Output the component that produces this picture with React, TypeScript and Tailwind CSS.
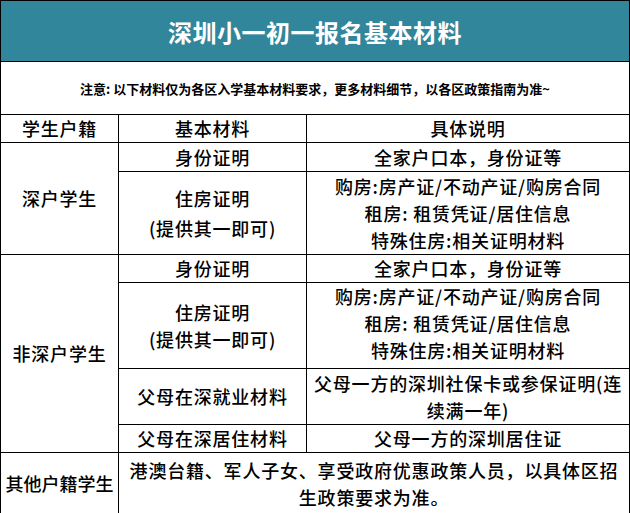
import React from "react";

export default function App() {
  return (
    <div className="min-h-screen bg-white font-['Noto_Sans_CJK_SC','Noto_Sans',sans-serif] text-black">
      <table className="w-[629px] table-fixed border-collapse border border-black text-[18px] font-medium tracking-[0.8px] leading-[27px]">
        <colgroup>
          <col className="w-[118px]" />
          <col className="w-[188px]" />
          <col className="w-[323px]" />
        </colgroup>
        <tbody>
          {/* title */}
          <tr className="h-[61px]">
            <td colSpan={3} className="border border-black bg-[#31869b] text-center text-[24px] font-bold tracking-[0.5px] text-white">
              深圳小一初一报名基本材料
            </td>
          </tr>
          <tr className="h-[53px]">
            <td colSpan={3} className="border border-black text-center text-[13px] font-bold tracking-normal">
              注意: 以下材料仅为各区入学基本材料要求，更多材料细节，以各区政策指南为准~
            </td>
          </tr>

          {/* column heads */}
          <tr className="h-[28px]">
            <td className="border border-black text-center">学生户籍</td>
            <td className="border border-black text-center">基本材料</td>
            <td className="border border-black text-center">具体说明</td>
          </tr>

          {/* 深户 */}
          <tr className="h-[29px]">
            <td rowSpan={2} className="border border-black text-center">深户学生</td>
            <td className="border border-black text-center">身份证明</td>
            <td className="border border-black text-center">全家户口本，身份证等</td>
          </tr>
          <tr className="h-[83px]">
            <td className="border border-black text-center leading-[30px]">
              住房证明
              <br />
              (提供其一即可)
            </td>
            <td className="border border-black text-center">
              购房:房产证/不动产证/购房合同
              <br />
              租房: 租赁凭证/居住信息
              <br />
              特殊住房:相关证明材料
            </td>
          </tr>

          {/* 非深户 */}
          <tr className="h-[28px]">
            <td rowSpan={4} className="border border-black text-center">非深户学生</td>
            <td className="border border-black text-center">身份证明</td>
            <td className="border border-black text-center">全家户口本，身份证等</td>
          </tr>
          <tr className="h-[85px]">
            <td className="border border-black text-center">
              住房证明
              <br />
              (提供其一即可)
            </td>
            <td className="border border-black pb-1 text-center">
              购房:房产证/不动产证/购房合同
              <br />
              租房: 租赁凭证/居住信息
              <br />
              特殊住房:相关证明材料
            </td>
          </tr>
          <tr className="h-[56px]">
            <td className="border border-black text-center">父母在深就业材料</td>
            <td className="border border-black text-center">
              父母一方的深圳社保卡或参保证明(连
              <br />
              续满一年)
            </td>
          </tr>
          <tr className="h-[26px]">
            <td className="border border-black text-center">父母在深居住材料</td>
            <td className="border border-black text-center">父母一方的深圳居住证</td>
          </tr>

          {/* 其他 */}
          <tr className="h-[62px]">
            <td className="border border-black text-center tracking-normal">其他户籍学生</td>
            <td colSpan={2} className="border border-black text-center">
              港澳台籍、军人子女、享受政府优惠政策人员，以具体区招
              <br />
              生政策要求为准。
            </td>
          </tr>
        </tbody>
      </table>
    </div>
  );
}
